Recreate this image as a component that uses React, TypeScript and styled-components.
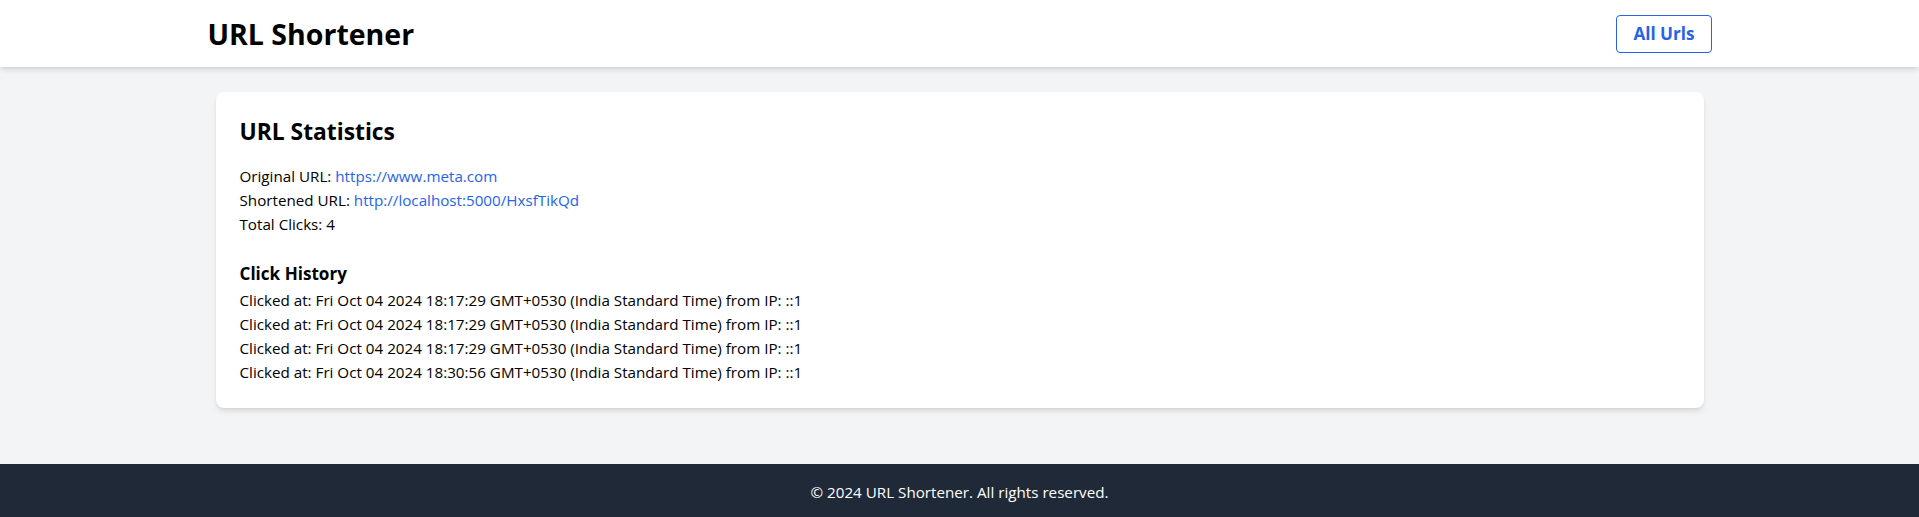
import React from "react";
import styled, { createGlobalStyle } from "styled-components";

const FONT = `"Open Sans", "Noto Sans", "Liberation Sans", sans-serif`;

const GlobalStyle = createGlobalStyle`
  html, body { margin: 0; padding: 0; overflow: hidden; }
  body {
    font-family: ${FONT};
    font-size: 15.2px;
    line-height: 24px;
    color: #000;
    background: #f3f4f6;
  }
  * { box-sizing: border-box; }
`;

const Page = styled.div`
  min-height: 100vh;
  display: flex;
  flex-direction: column;
  background: #f3f4f6;
`;

const Header = styled.header`
  background: #fff;
  box-shadow: 0 4px 6px -1px rgba(0, 0, 0, 0.1), 0 2px 4px -2px rgba(0, 0, 0, 0.1);
  position: relative;
  z-index: 1;
`;

const HeaderInner = styled.div`
  max-width: 1536px;
  height: 67px;
  margin: 0 auto;
  padding: 0 16px;
  display: flex;
  align-items: center;
  justify-content: space-between;
`;

const Brand = styled.h1`
  margin: 0;
  font-size: 28.5px;
  line-height: 36px;
  font-weight: 700;
`;

const NavButton = styled.a`
  display: inline-block;
  border: 1px solid #2563eb;
  border-radius: 4px;
  padding: 4px 16px;
  color: #2563eb;
  font-size: 17.1px;
  line-height: 28px;
  font-weight: 700;
  text-decoration: none;
`;

const Main = styled.main`
  flex: 1;
  width: 100%;
  max-width: 1536px;
  margin: 0 auto;
  padding: 25px 24px 56px;
`;

const Card = styled.section`
  background: #fff;
  border-radius: 8px;
  box-shadow: 0 4px 6px -1px rgba(0, 0, 0, 0.1), 0 2px 4px -2px rgba(0, 0, 0, 0.1);
  padding: 24px;
`;

const CardTitle = styled.h2`
  margin: 0 0 16px;
  font-size: 22.8px;
  line-height: 32px;
  font-weight: 700;
`;

const Line = styled.p`
  margin: 0;
  font-size: 15.2px;
  line-height: 24px;
`;

const Link = styled.a`
  color: #2563eb;
  text-decoration: none;
`;

const SubTitle = styled.h3`
  margin: 24px 0 0;
  font-size: 17.1px;
  line-height: 28px;
  font-weight: 700;
`;

const HistoryList = styled.ul`
  list-style: none;
  margin: 0;
  padding: 0;
`;

const HistoryItem = styled.li`
  font-size: 15.2px;
  line-height: 24px;
`;

const Footer = styled.footer`
  background: #1f2937;
  color: #fff;
  text-align: center;
  padding: 16px;
  font-size: 15.2px;
  line-height: 24px;
`;

const clicks = [
  "Fri Oct 04 2024 18:17:29 GMT+0530 (India Standard Time)",
  "Fri Oct 04 2024 18:17:29 GMT+0530 (India Standard Time)",
  "Fri Oct 04 2024 18:17:29 GMT+0530 (India Standard Time)",
  "Fri Oct 04 2024 18:30:56 GMT+0530 (India Standard Time)",
];

export default function App() {
  return (
    <>
      <GlobalStyle />
      <Page>
        <Header>
          <HeaderInner>
            <Brand>URL Shortener</Brand>
            <NavButton href="#">All Urls</NavButton>
          </HeaderInner>
        </Header>
        <Main>
          <Card>
            <CardTitle>URL Statistics</CardTitle>
            <Line>
              Original URL: <Link href="#">https://www.meta.com</Link>
            </Line>
            <Line>
              Shortened URL: <Link href="#">http://localhost:5000/HxsfTikQd</Link>
            </Line>
            <Line>Total Clicks: 4</Line>
            <SubTitle>Click History</SubTitle>
            <HistoryList>
              {clicks.map((c, i) => (
                <HistoryItem key={i}>
                  Clicked at: {c} from IP: ::1
                </HistoryItem>
              ))}
            </HistoryList>
          </Card>
        </Main>
        <Footer>© 2024 URL Shortener. All rights reserved.</Footer>
      </Page>
    </>
  );
}
